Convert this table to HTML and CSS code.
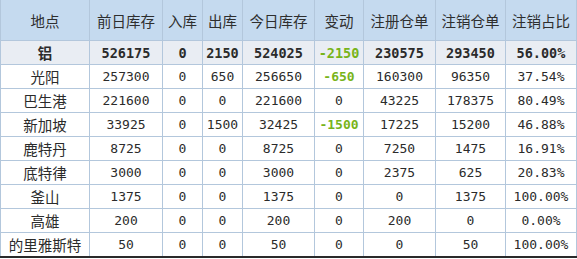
FILE: index.html
```html
<!DOCTYPE html>
<html>
<head>
<meta charset="utf-8">
<link rel="stylesheet" href="styles.css">
</head>
<body>
<table class="tbl">
  <colgroup>
    <col class="c1"><col class="c2"><col class="c3"><col class="c4"><col class="c5"><col class="c6"><col class="c7"><col class="c8"><col class="c9">
  </colgroup>
  <thead>
    <tr><th>地点</th><th>前日库存</th><th>入库</th><th>出库</th><th>今日库存</th><th>变动</th><th>注册仓单</th><th>注销仓单</th><th>注销占比</th></tr>
  </thead>
  <tbody>
    <tr class="total"><td class="name">铝</td><td>526175</td><td>0</td><td>2150</td><td>524025</td><td class="neg">-2150</td><td>230575</td><td>293450</td><td>56.00%</td></tr>
    <tr><td class="name">光阳</td><td>257300</td><td>0</td><td>650</td><td>256650</td><td class="neg">-650</td><td>160300</td><td>96350</td><td>37.54%</td></tr>
    <tr><td class="name">巴生港</td><td>221600</td><td>0</td><td>0</td><td>221600</td><td>0</td><td>43225</td><td>178375</td><td>80.49%</td></tr>
    <tr><td class="name">新加坡</td><td>33925</td><td>0</td><td>1500</td><td>32425</td><td class="neg">-1500</td><td>17225</td><td>15200</td><td>46.88%</td></tr>
    <tr><td class="name">鹿特丹</td><td>8725</td><td>0</td><td>0</td><td>8725</td><td>0</td><td>7250</td><td>1475</td><td>16.91%</td></tr>
    <tr><td class="name">底特律</td><td>3000</td><td>0</td><td>0</td><td>3000</td><td>0</td><td>2375</td><td>625</td><td>20.83%</td></tr>
    <tr><td class="name">釜山</td><td>1375</td><td>0</td><td>0</td><td>1375</td><td>0</td><td>0</td><td>1375</td><td>100.00%</td></tr>
    <tr><td class="name">高雄</td><td>200</td><td>0</td><td>0</td><td>200</td><td>0</td><td>200</td><td>0</td><td>0.00%</td></tr>
    <tr><td class="name">的里雅斯特</td><td>50</td><td>0</td><td>0</td><td>50</td><td>0</td><td>0</td><td>50</td><td>100.00%</td></tr>
  </tbody>
</table>
</body>
</html>
```

FILE: styles.css
```css
html, body {
  margin: 0;
  padding: 0;
  background: #ffffff;
}

.tbl {
  border-collapse: collapse;
  table-layout: fixed;
  width: 576px;
  border-left: 1px solid #2a2a2a;
  border-bottom: 2px solid #2a2a2a;
  font-family: "DejaVu Sans Mono", "Noto Sans CJK SC", monospace;
  font-size: 13px;
  color: #2b2b2b;
}

.c1 { width: 89px; }
.c2 { width: 73px; }
.c3 { width: 40px; }
.c4 { width: 40px; }
.c5 { width: 72px; }
.c6 { width: 49px; }
.c7 { width: 72px; }
.c8 { width: 70px; }
.c9 { width: 71px; }

.tbl th,
.tbl td {
  border: 1px solid #b3c7dc;
  padding: 0;
  text-align: center;
  vertical-align: middle;
  white-space: nowrap;
  overflow: hidden;
}

.tbl tr:first-child th { border-top: none; }
.tbl th:last-child,
.tbl td:last-child { border-right-color: #b3c7dc; }

.tbl th {
  height: 40px;
  background: #c5daef;
  font-family: "Noto Sans CJK SC", sans-serif;
  font-weight: normal;
  font-size: 14.5px;
  color: #2e2e2e;
}

.tbl td {
  height: 23px;
}

.tbl td.name {
  font-family: "Noto Sans CJK SC", sans-serif;
  font-size: 14.5px;
}

.total td {
  background: #e9edf3;
  font-weight: bold;
  font-size: 13.5px;
}

.total td.name {
  font-weight: bold;
}

.neg {
  color: #78b41a;
  font-weight: bold;
}
```
